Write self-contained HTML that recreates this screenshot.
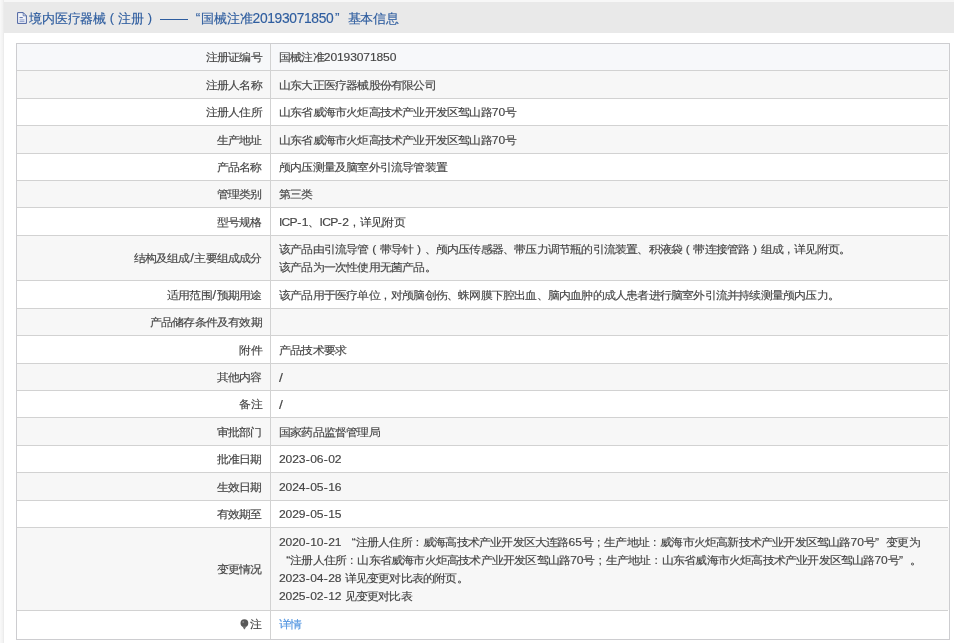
<!DOCTYPE html>
<html><head><meta charset="utf-8"><style>
html,body{margin:0;padding:0;}
body{width:954px;height:643px;overflow:hidden;background:#f7f7f7;position:relative;font-family:"Liberation Sans",sans-serif;}
.wrap{position:absolute;left:0;top:0;width:954px;height:643px;filter:blur(0.35px);}
.panel{position:absolute;left:3.5px;top:2px;right:0;bottom:0;background:#fff;}
.hd{position:absolute;left:3.5px;top:2px;right:0;height:30.6px;background:#e9e9e9;}
.title{position:absolute;top:10.5px;font-size:12.8px;line-height:16px;color:#2e5d9f;-webkit-text-stroke:0.15px #2e5d9f;white-space:nowrap;letter-spacing:-0.2px}
.ico{position:absolute;left:17px;top:12px;width:10px;height:12px;}
.row{position:absolute;left:17px;width:932px;}
.hl{position:absolute;left:17px;width:931px;height:1px;background:#d2d2d2;}
.vl{position:absolute;left:270px;top:44px;width:1px;height:595px;background:#d2d2d2;}
.tb{position:absolute;left:16px;top:43px;width:934px;height:597px;border:1px solid #cdcdd0;box-sizing:border-box;}
.lab,.val{position:absolute;font-size:11.2px;color:#444;-webkit-text-stroke:0.15px #444;letter-spacing:-0.630px;display:flex;align-items:center;white-space:nowrap;line-height:18px;box-sizing:border-box;}
.lab{left:17px;width:244.8px;justify-content:flex-end;}
.val{left:279px;}
.lab>div{transform:scaleX(1.08);transform-origin:right center;}
.val>div{transform:scaleX(1.08);transform-origin:left center;}
.n{letter-spacing:-0.123px;}
.sp{display:inline-block;width:3.241px;}
.fw{display:inline-block;width:10.370px;letter-spacing:0;}
.sl{font-size:13px;position:relative;top:1px;}
.sl2{display:inline-block;width:4.6px;text-align:center;letter-spacing:0;font-size:12px;}
.hy{display:inline-block;width:4.491px;text-align:center;letter-spacing:0;}
.lt{letter-spacing:-0.694px;}
.c{text-align:center;} .r{text-align:right;} .l{text-align:left;}
.pin{display:inline-block;width:9px;vertical-align:-1px;}
.lnk{color:#5596e0;-webkit-text-stroke-color:#5596e0;}
</style></head><body><div class="wrap">
<div style="position:absolute;left:0;top:0;width:4px;height:643px;background:linear-gradient(to right,#f9f9f9,#f3f3f3 60%,#e9e9e9)"></div>
<div class="panel"></div>
<div class="hd"></div>
<svg class="ico" viewBox="0 0 10 12"><path d="M0.6 0.6H6.2L9.4 3.8V11.4H0.6Z" fill="#f3f5fa" stroke="#4a62a0" stroke-width="1" stroke-linejoin="miter"/><path d="M6.2 0.6V3.8H9.4" fill="none" stroke="#3d5a9c" stroke-width="0.7"/><path d="M2.5 5.6H5.8" stroke="#5a6fa8" stroke-width="1"/><path d="M2.5 7.9H7.5M2.5 9.4H7.5" stroke="#8fa0cc" stroke-width="1"/></svg>
<div class="title" style="left:29.3px">境内医疗器械</div>
<div class="title" style="left:109.7px;top:9.5px;letter-spacing:0">(</div>
<div class="title" style="left:118.3px">注册</div>
<div class="title" style="left:147.7px;top:9.5px;letter-spacing:0">)</div>
<div style="position:absolute;left:159.8px;top:19.2px;width:28.3px;height:1.1px;background:#2e5d9f"></div>
<div class="title" style="left:195.8px;top:9.9px;font-size:13.5px;letter-spacing:0">&#8220;</div>
<div class="title" style="left:201.2px">国械注准</div>
<div class="title" style="left:252.6px;top:10.7px;font-size:13.8px;letter-spacing:-0.33px">20193071850</div>
<div class="title" style="left:335.1px;top:9.9px;font-size:13.5px;letter-spacing:0">&#8221;</div>
<div class="title" style="left:347.6px">基本信息</div>
<div class="tb"></div>
<div class="row" style="top:44px;height:26px;background:#f7f8fa"></div>
<div class="hl" style="top:70px"></div>
<div class="lab" style="top:44px;height:26px;"><div>注册证编号</div></div>
<div class="val" style="top:44px;height:26px;"><div>国械注准<span class=n>20193071850</span></div></div>
<div class="row" style="top:71px;height:27px;background:#f7f7f7"></div>
<div class="hl" style="top:98px"></div>
<div class="lab" style="top:71px;height:27px;"><div>注册人名称</div></div>
<div class="val" style="top:71px;height:27px;"><div>山东大正医疗器械股份有限公司</div></div>
<div class="row" style="top:99px;height:26px;background:#ffffff"></div>
<div class="hl" style="top:125px"></div>
<div class="lab" style="top:99px;height:26px;"><div>注册人住所</div></div>
<div class="val" style="top:99px;height:26px;"><div>山东省威海市火炬高技术产业开发区驾山路<span class=n>70</span>号</div></div>
<div class="row" style="top:126px;height:27px;background:#f7f7f7"></div>
<div class="hl" style="top:153px"></div>
<div class="lab" style="top:126px;height:27px;"><div>生产地址</div></div>
<div class="val" style="top:126px;height:27px;"><div>山东省威海市火炬高技术产业开发区驾山路<span class=n>70</span>号</div></div>
<div class="row" style="top:154px;height:26px;background:#ffffff"></div>
<div class="hl" style="top:180px"></div>
<div class="lab" style="top:154px;height:26px;"><div>产品名称</div></div>
<div class="val" style="top:154px;height:26px;"><div>颅内压测量及脑室外引流导管装置</div></div>
<div class="row" style="top:181px;height:26px;background:#f7f7f7"></div>
<div class="hl" style="top:207px"></div>
<div class="lab" style="top:181px;height:26px;"><div>管理类别</div></div>
<div class="val" style="top:181px;height:26px;"><div>第三类</div></div>
<div class="row" style="top:208px;height:27px;background:#ffffff"></div>
<div class="hl" style="top:235px"></div>
<div class="lab" style="top:208px;height:27px;"><div>型号规格</div></div>
<div class="val" style="top:208px;height:27px;"><div><span class=n><span class=lt>ICP</span><span class=hy>-</span>1</span>、<span class=n><span class=lt>ICP</span><span class=hy>-</span>2</span><span class="fw c">,</span>详见附页</div></div>
<div class="row" style="top:236px;height:44px;background:#f7f7f7"></div>
<div class="hl" style="top:280px"></div>
<div class="lab" style="top:236px;height:44px;"><div>结构及组成<span class=sl2>/</span>主要组成成分</div></div>
<div class="val" style="top:236px;height:44px;padding-bottom:1px"><div>该产品由引流导管<span class="fw c">(</span>带导针<span class="fw c">)</span>、颅内压传感器、带压力调节瓶的引流装置、积液袋<span class="fw c">(</span>带连接管路<span class="fw c">)</span>组成<span class="fw c">,</span>详见附页。<br>该产品为一次性使用无菌产品。</div></div>
<div class="row" style="top:281px;height:27px;background:#ffffff"></div>
<div class="hl" style="top:308px"></div>
<div class="lab" style="top:281px;height:27px;"><div>适用范围<span class=sl2>/</span>预期用途</div></div>
<div class="val" style="top:281px;height:27px;"><div>该产品用于医疗单位<span class="fw c">,</span>对颅脑创伤、蛛网膜下腔出血、脑内血肿的成人患者进行脑室外引流并持续测量颅内压力。</div></div>
<div class="row" style="top:309px;height:26px;background:#f7f7f7"></div>
<div class="hl" style="top:335px"></div>
<div class="lab" style="top:309px;height:26px;"><div>产品储存条件及有效期</div></div>
<div class="val" style="top:309px;height:26px;"><div></div></div>
<div class="row" style="top:336px;height:27px;background:#ffffff"></div>
<div class="hl" style="top:363px"></div>
<div class="lab" style="top:336px;height:27px;"><div>附件</div></div>
<div class="val" style="top:336px;height:27px;"><div>产品技术要求</div></div>
<div class="row" style="top:364px;height:26px;background:#f7f7f7"></div>
<div class="hl" style="top:390px"></div>
<div class="lab" style="top:364px;height:26px;"><div>其他内容</div></div>
<div class="val" style="top:364px;height:26px;"><div><span class=sl>/</span></div></div>
<div class="row" style="top:391px;height:26px;background:#ffffff"></div>
<div class="hl" style="top:417px"></div>
<div class="lab" style="top:391px;height:26px;"><div>备注</div></div>
<div class="val" style="top:391px;height:26px;"><div><span class=sl>/</span></div></div>
<div class="row" style="top:418px;height:27px;background:#f7f7f7"></div>
<div class="hl" style="top:445px"></div>
<div class="lab" style="top:418px;height:27px;"><div>审批部门</div></div>
<div class="val" style="top:418px;height:27px;"><div>国家药品监督管理局</div></div>
<div class="row" style="top:446px;height:26px;background:#ffffff"></div>
<div class="hl" style="top:472px"></div>
<div class="lab" style="top:446px;height:26px;"><div>批准日期</div></div>
<div class="val" style="top:446px;height:26px;"><div><span class=n>2023<span class=hy>-</span>06<span class=hy>-</span>02</span></div></div>
<div class="row" style="top:473px;height:27px;background:#f7f7f7"></div>
<div class="hl" style="top:500px"></div>
<div class="lab" style="top:473px;height:27px;"><div>生效日期</div></div>
<div class="val" style="top:473px;height:27px;"><div><span class=n>2024<span class=hy>-</span>05<span class=hy>-</span>16</span></div></div>
<div class="row" style="top:501px;height:26px;background:#ffffff"></div>
<div class="hl" style="top:527px"></div>
<div class="lab" style="top:501px;height:26px;"><div>有效期至</div></div>
<div class="val" style="top:501px;height:26px;"><div><span class=n>2029<span class=hy>-</span>05<span class=hy>-</span>15</span></div></div>
<div class="row" style="top:528px;height:82px;background:#f7f7f7"></div>
<div class="hl" style="top:610px"></div>
<div class="lab" style="top:528px;height:82px;"><div>变更情况</div></div>
<div class="val" style="top:528px;height:82px;padding-bottom:1px"><div><span class=n>2020<span class=hy>-</span>10<span class=hy>-</span>21 </span><span class="fw r">&#8220;</span>注册人住所<span class="fw c">:</span>威海高技术产业开发区大连路<span class=n>65</span>号<span class="fw c">;</span>生产地址<span class="fw c">:</span>威海市火炬高新技术产业开发区驾山路<span class=n>70</span>号<span class="fw l">&#8221;</span>变更为<br><span class="fw r">&#8220;</span>注册人住所<span class="fw c">:</span>山东省威海市火炬高技术产业开发区驾山路<span class=n>70</span>号<span class="fw c">;</span>生产地址<span class="fw c">:</span>山东省威海市火炬高技术产业开发区驾山路<span class=n>70</span>号<span class="fw l">&#8221;</span>。<br><span class=n>2023<span class=hy>-</span>04<span class=hy>-</span>28 </span>详见变更对比表的附页。<br><span class=n>2025<span class=hy>-</span>02<span class=hy>-</span>12 </span>见变更对比表</div></div>
<div class="row" style="top:611px;height:27px;background:#ffffff"></div>
<div class="lab" style="top:611px;height:27px;padding-bottom:1.2px"><div>注</div></div>
<div class="val" style="top:611px;height:27px;padding-bottom:1.6px"><div><span class=lnk>详情</span></div></div>
<div class="vl"></div>
<svg style="position:absolute;left:240.3px;top:618.8px" width="9" height="11" viewBox="0 0 9 11"><circle cx="4.4" cy="4.1" r="3.9" fill="#585858"/><path d="M2.3 6.9L6.5 6.9L4.8 10.2H4Z" fill="#6a6a6a"/><circle cx="3.2" cy="2.9" r="1" fill="#8a8a8a"/></svg>
</div></body></html>
